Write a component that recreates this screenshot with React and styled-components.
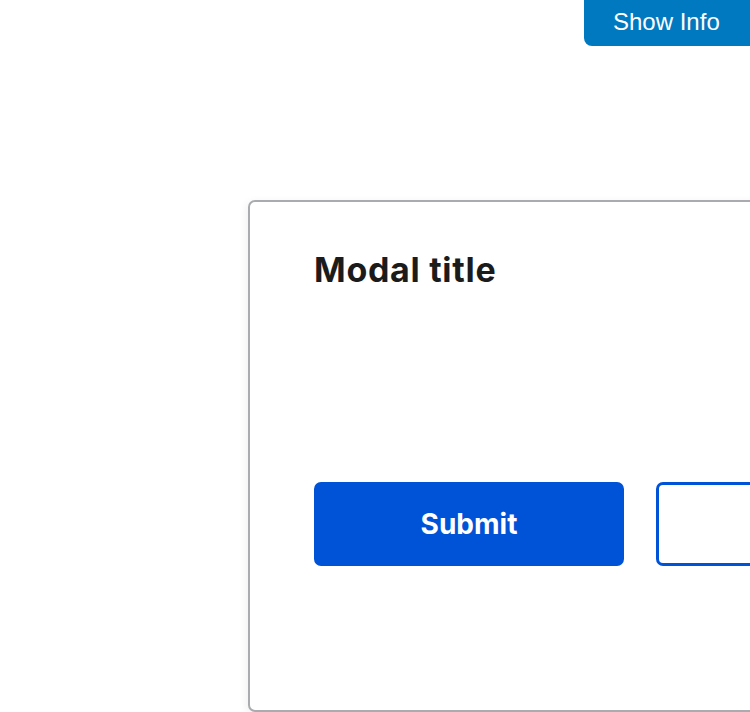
import React from 'react'
import styled, { createGlobalStyle } from 'styled-components'

//STYLES
const GlobalStyle = createGlobalStyle`
    html, body {
        margin: 0;
        padding: 0;
        background: #ffffff;
        overflow: hidden;
    }
    * { box-sizing: border-box; }
`

const Page = styled.div`
    position: relative;
    width: 750px;
    height: 712px;
    overflow: hidden;
    padding: 200px 0 0 248px;
`

const InfoButton = styled.button`
    position: absolute;
    top: 0;
    right: -10px;
    width: 176px;
    height: 46px;
    padding: 0 0 2px 0;
    border: none;
    border-radius: 0 0 0 8px;
    background: #0079c1;
    color: #ffffff;
    font-family: "Liberation Sans", Arial, sans-serif;
    font-size: 24px;
    text-align: left;
    text-indent: 29px;
`

const Modal = styled.div`
    width: 782px;
    height: 512px;
    flex-shrink: 0;
    border: 2px solid #a9abae;
    border-radius: 7px;
    background: #ffffff;
    box-shadow: -2px 2px 8px rgba(0, 0, 0, 0.06);
    padding: 48px 64px 0 64px;
    display: flex;
    flex-direction: column;
`

const Title = styled.h2`
    margin: 0;
    font-family: "Inter", "Noto Sans", sans-serif;
    font-weight: 700;
    font-size: 34px;
    line-height: 40px;
    letter-spacing: 0.7px;
    color: #1b1b1b;
`

const Actions = styled.div`
    display: flex;
    gap: 32px;
    margin-top: 192px;
`

const ActionButton = styled.button`
    width: 310px;
    height: 84px;
    flex-shrink: 0;
    padding: 0;
    border-radius: 7px;
    font-family: "Inter", "Noto Sans", sans-serif;
    font-weight: 700;
    font-size: 28px;
    border: 3px solid #0052d6;
    background: ${({ $primary }) => ($primary ? '#0052d6' : '#ffffff')};
    color: ${({ $primary }) => ($primary ? '#ffffff' : '#0052d6')};
`

//MAIN COMPONENT
const App = () => {
    return (
        <Page>
            <GlobalStyle />
            <InfoButton>Show Info</InfoButton>
            <Modal>
                <Title>Modal title</Title>
                <Actions>
                    <ActionButton $primary>Submit</ActionButton>
                    <ActionButton>Cancel</ActionButton>
                </Actions>
            </Modal>
        </Page>
    )
}
export default App
